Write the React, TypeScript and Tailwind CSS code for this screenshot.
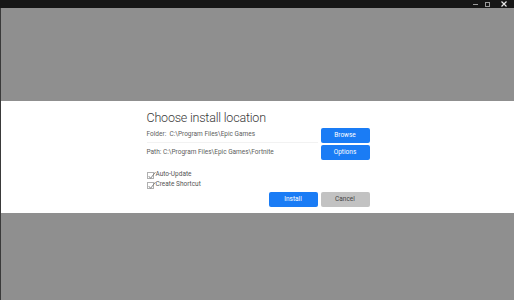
import React from "react";

function CheckBox({ label }: { label: string }) {
  return (
    <label className="flex items-center gap-[2px] h-[10px]">
      <span className="relative w-[7px] h-[7px] border border-[#b0b0b0] bg-white">
        <svg viewBox="0 0 8 8" className="absolute -left-[1px] -top-[2px] w-[9px] h-[9px]">
          <path d="M1.5 4.5 L3.2 6.5 L7.5 1" fill="none" stroke="#777" strokeWidth="0.8" />
        </svg>
      </span>
      <span className="text-[6.5px] text-[#555]">{label}</span>
    </label>
  );
}

export default function App() {
  return (
    <div className="w-[514px] h-[300px] flex flex-col bg-[#8f8f8f] overflow-hidden" style={{ fontFamily: "Roboto, 'Liberation Sans', sans-serif" }}>
      <div className="h-[8px] bg-[#161616] flex items-center justify-end gap-[7px] pr-[7px]">
        <span className="w-[5px] h-[1px] bg-[#9a9a9a]" />
        <span className="w-[5px] h-[5px] border border-[#9a9a9a]" />
        <svg viewBox="0 0 6 6" className="w-[6px] h-[6px] ml-[4px]">
          <path d="M0.5 0.5 L5.5 5.5 M5.5 0.5 L0.5 5.5" stroke="#e8e8e8" strokeWidth="1.2" />
        </svg>
      </div>
      <div className="flex-1 flex flex-col border-l border-[#3a3a3a]">
        <div className="h-[93px]" />
        <div className="h-[112px] bg-white flex justify-center">
          <div className="w-[224px] pt-[8px] pl-[1px]">
            <h1 className="text-[12.5px] font-light text-[#3a3a3a] leading-[17px] tracking-[-0.2px]">Choose install location</h1>
            <div className="mt-[2px] flex items-center gap-[3px]">
              <div className="w-[171px] h-[15px] flex items-center border-b border-[#f2f2f2] text-[6.5px] text-[#606060]">
                Folder:&nbsp; C:\Program Files\Epic Games
              </div>
              <button className="w-[49px] h-[15px] rounded-[2px] bg-[#1a7cf5] text-white text-[6.5px]">Browse</button>
            </div>
            <div className="mt-[2px] flex items-center gap-[3px]">
              <div className="w-[171px] h-[15px] flex items-center text-[6.5px] text-[#606060]">
                Path: C:\Program Files\Epic Games\Fortnite
              </div>
              <button className="w-[49px] h-[15px] rounded-[2px] bg-[#1a7cf5] text-white text-[6.5px]">Options</button>
            </div>
            <div className="mt-[10px] flex flex-col">
              <CheckBox label="Auto-Update" />
              <CheckBox label="Create Shortcut" />
            </div>
            <div className="mt-[2px] flex justify-end gap-[3px] pr-[0px]">
              <button className="w-[49px] h-[15px] rounded-[2px] bg-[#1a7cf5] text-white text-[6.5px]">Install</button>
              <button className="w-[49px] h-[15px] rounded-[2px] bg-[#c2c2c2] text-[#444] text-[6.5px]">Cancel</button>
            </div>
          </div>
        </div>
      </div>
    </div>
  );
}
